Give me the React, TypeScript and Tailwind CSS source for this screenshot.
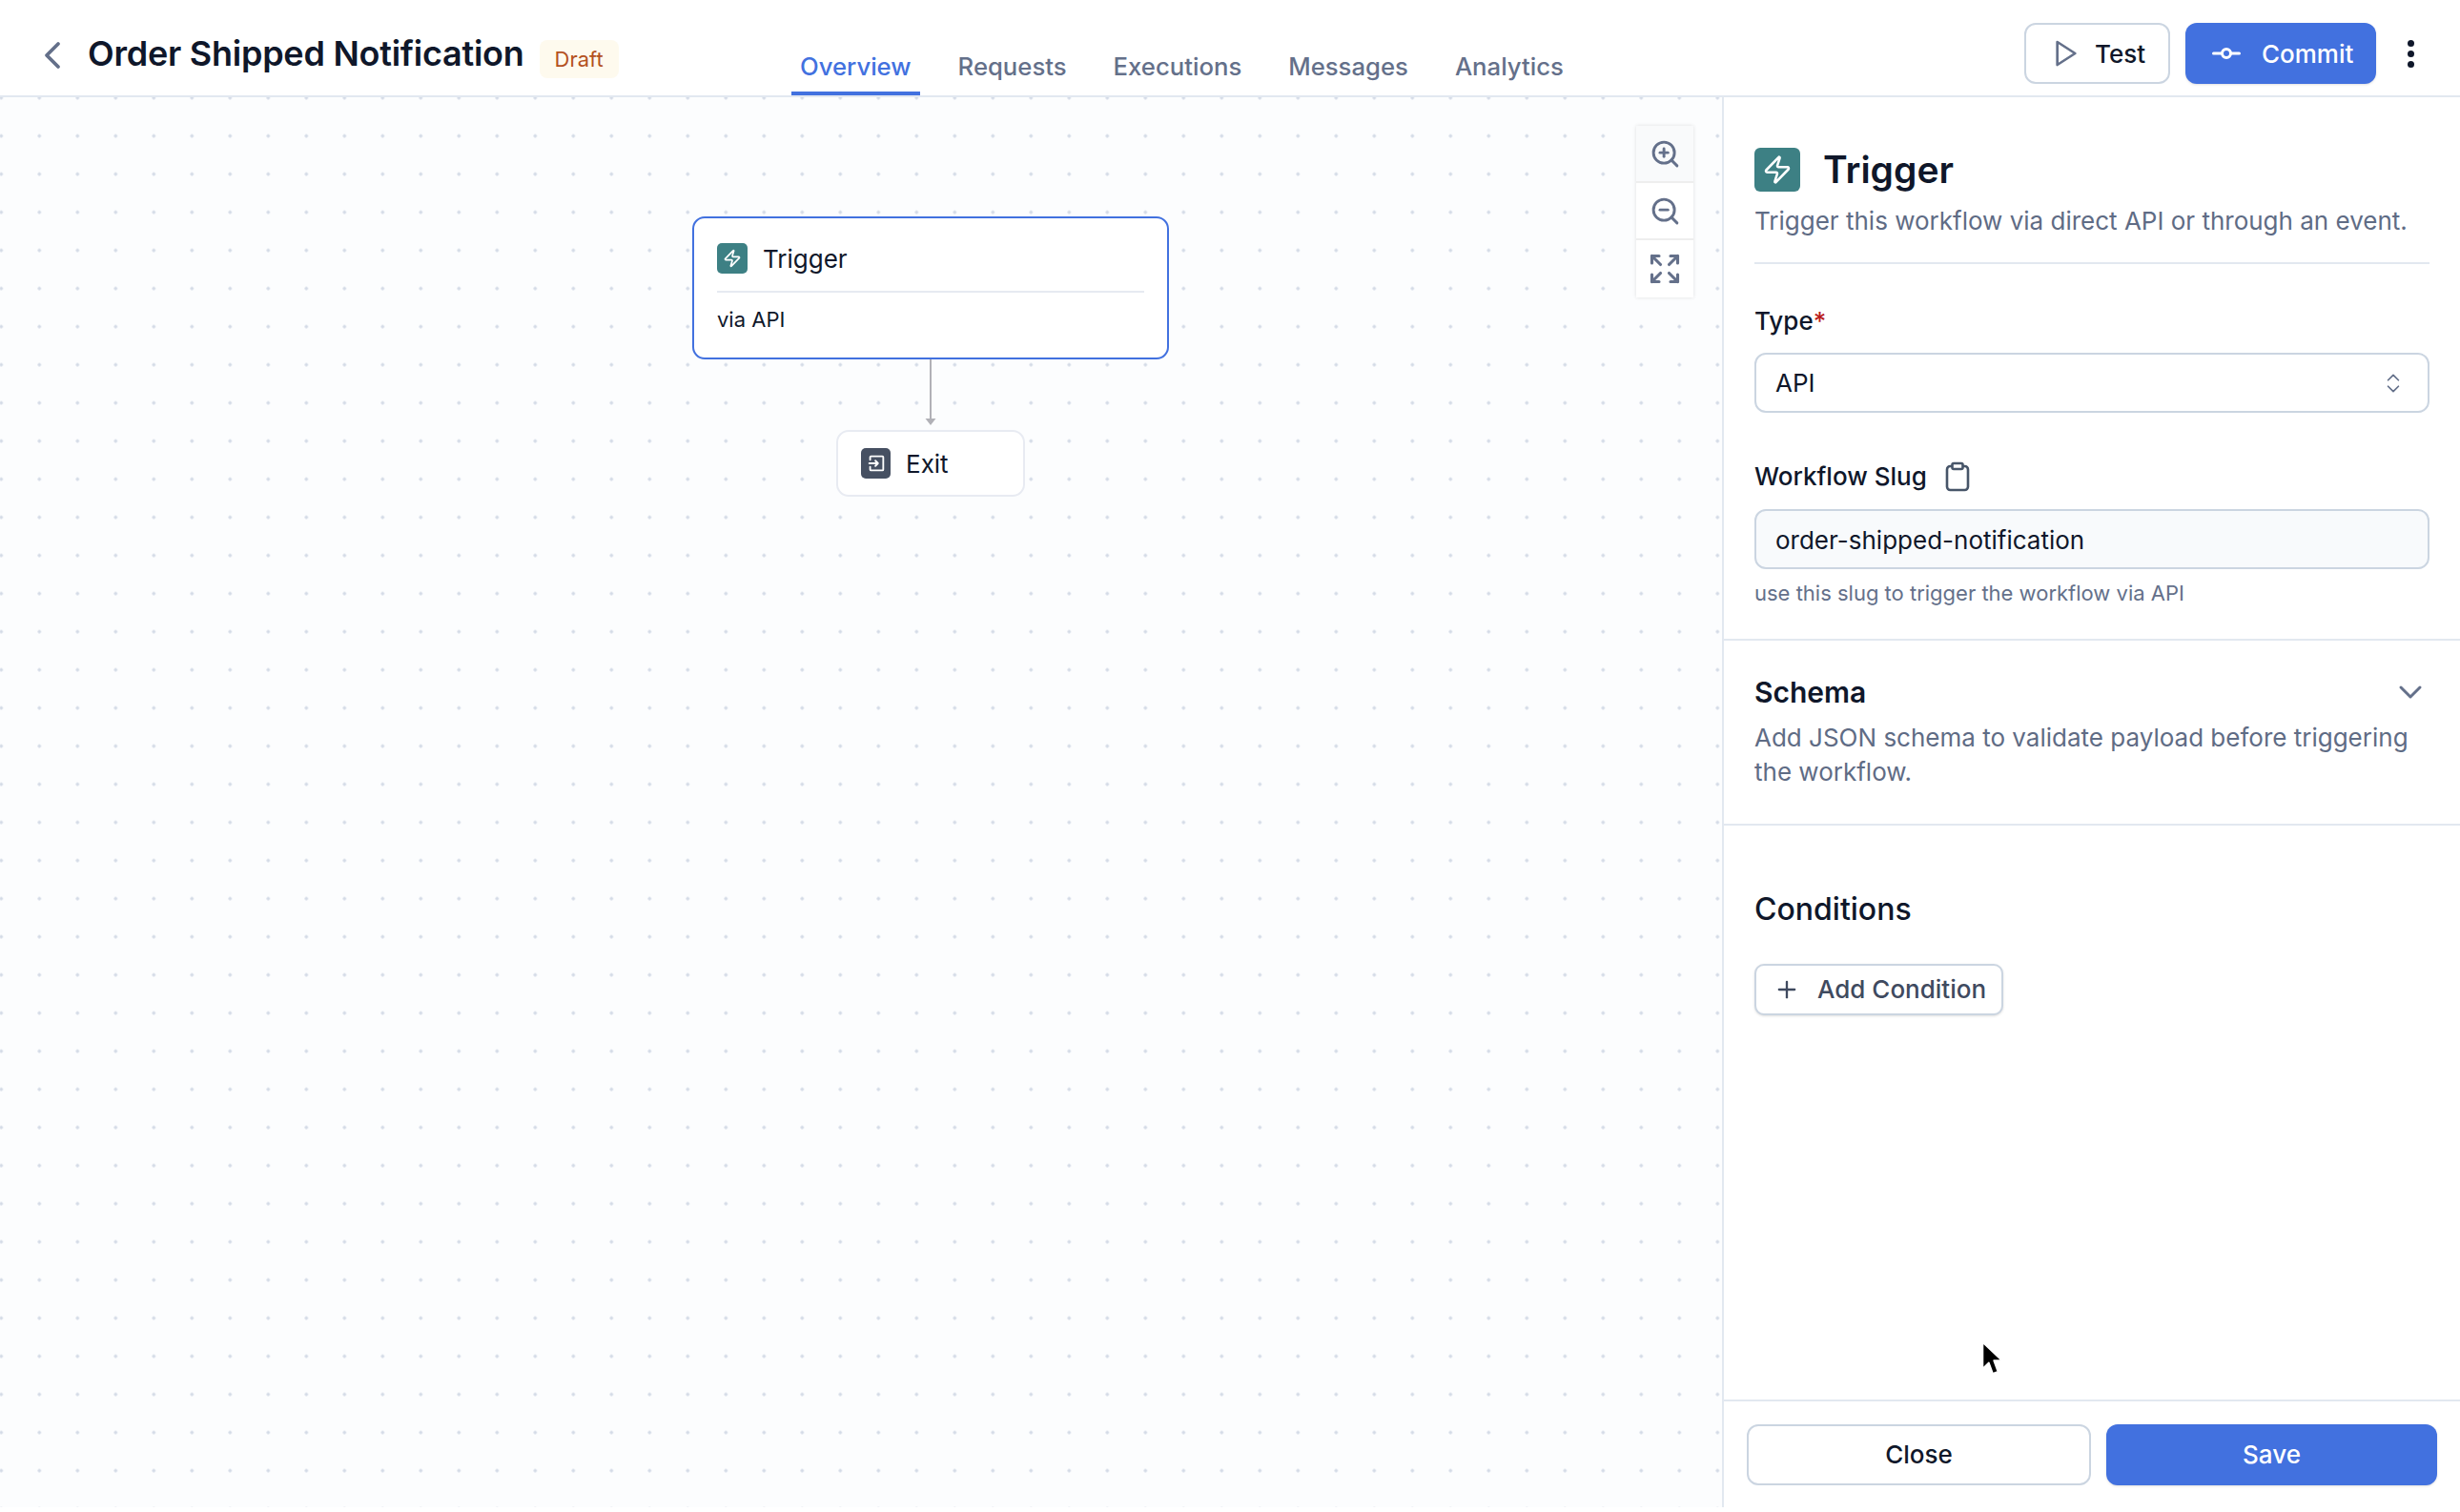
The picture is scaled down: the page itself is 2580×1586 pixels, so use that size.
import React from "react";
import { ChevronLeft, ChevronDown, ChevronsUpDown, Expand, GitCommitHorizontal, Plus, Zap, ZoomIn, ZoomOut } from "lucide-react";

const tabs = ["Overview", "Requests", "Executions", "Messages", "Analytics"];

function ExitGlyph() {
  return (
    <svg viewBox="0 0 24 24" className="w-[22px] h-[22px]" fill="none" stroke="currentColor" strokeWidth="2" strokeLinecap="round" strokeLinejoin="round">
      <path d="M5 8V5a1 1 0 0 1 1-1h13a1 1 0 0 1 1 1v14a1 1 0 0 1-1 1H6a1 1 0 0 1-1-1v-3" />
      <path d="M4 12h10M11 9l3 3-3 3" />
    </svg>
  );
}

function PlayGlyph() {
  return (
    <svg viewBox="0 0 24 24" className="w-[32px] h-[32px] text-[#64708a]" fill="none" stroke="currentColor" strokeWidth="2" strokeLinejoin="round">
      <polygon points="5 3 19 12 5 21 5 3" />
    </svg>
  );
}

function ClipboardGlyph() {
  return (
    <svg viewBox="0 0 26 32" className="w-[26px] h-[32px] text-[#475569] ml-[19px]" fill="none" stroke="currentColor" strokeWidth="2.6" strokeLinejoin="round">
      <rect x="2" y="5" width="22" height="25" rx="3.5" />
      <rect x="7.5" y="2" width="11" height="6" rx="1.5" fill="white" />
    </svg>
  );
}

function CursorGlyph() {
  return (
    <svg viewBox="0 0 22 36" className="w-[24px] h-[38px] absolute left-[2077px] top-[1406px]">
      <path d="M2 2v26l6-6 4 11 5-2-4-11h8z" fill="#000" stroke="#fff" strokeWidth="1.5" strokeLinejoin="round" />
    </svg>
  );
}

export default function App() {
  return (
    <div className="relative w-[2580px] h-[1586px] bg-white text-[#0f172a] [font-family:Inter,sans-serif] overflow-hidden">
      <div className="flex flex-col h-[1581px]">
        <header className="flex h-[102px] shrink-0 border-b-2 border-[#e2e8f0]">
          <div className="flex w-[830px] shrink-0 items-center pl-[31px] pt-[12px]">
            <ChevronLeft size={48} strokeWidth={1.9} className="text-[#64708a] shrink-0 mt-[3px]" />
            <h1 className="ml-[13px] text-[36px] leading-[48px] font-semibold tracking-[-0.25px] whitespace-nowrap">Order Shipped Notification</h1>
            <span className="ml-[16px] mt-[12px] h-[40px] px-[16px] flex items-center rounded-[8px] bg-[#fefaee] text-[#b4511f] text-[22px]">Draft</span>
          </div>
          <nav className="flex gap-[31px]">
            {tabs.map((t, i) => (
              <div
                key={t}
                className={
                  i === 0
                    ? "px-[9px] h-[100px] pt-[52px] text-[25.7px] leading-[36px] font-medium text-[#4271df] border-b-4 border-[#4271df]"
                    : "px-[9px] h-[100px] pt-[52px] text-[25.7px] leading-[36px] font-medium text-[#64708a]"
                }
              >
                {t}
              </div>
            ))}
          </nav>
          <div className="ml-auto flex items-start pt-[24px] pr-[48px]">
            <button className="flex items-center h-[64px] w-[153px] pl-[26px] rounded-[12px] border-2 border-[#cbd5e1] bg-white text-[26px] font-medium">
              <PlayGlyph />
              <span className="ml-[14px]">Test</span>
            </button>
            <button className="ml-[16px] flex items-center h-[64px] w-[200px] pl-[25px] rounded-[12px] bg-[#4271df] text-white text-[26px] font-medium shadow-sm">
              <GitCommitHorizontal size={36} strokeWidth={2} />
              <span className="ml-[19px]">Commit</span>
            </button>
            <div className="ml-[32px] h-[64px] w-[8px] flex flex-col items-center justify-center gap-[4px]">
              <span className="w-[7px] h-[7px] rounded-full bg-[#0f172a]" />
              <span className="w-[7px] h-[7px] rounded-full bg-[#0f172a]" />
              <span className="w-[7px] h-[7px] rounded-full bg-[#0f172a]" />
            </div>
          </div>
        </header>

        <div className="flex flex-1 min-h-0">
          <main className="relative flex-1 bg-[#fcfdfe] bg-[radial-gradient(#d3dae6_1.5px,transparent_1.8px)] bg-[length:40px_40px] bg-[position:-18.7px_-19.4px]">
            <div className="absolute left-[726px] top-[125px] w-[500px] h-[150px] rounded-[13px] border-2 border-[#4271df] bg-white px-[24px]">
              <div className="flex items-center h-[78px] pt-[8px] border-b-2 border-[#e6eaf1]">
                <span className="w-[32px] h-[32px] rounded-[5px] bg-[#3d8084] text-white flex items-center justify-center">
                  <Zap size={20} strokeWidth={2} />
                </span>
                <span className="ml-[16px] text-[26px]">Trigger</span>
              </div>
              <div className="pt-[12px] text-[22px] leading-[32px]">via API</div>
            </div>
            <svg className="absolute left-[968px] top-[275px] w-[16px] h-[70px]" viewBox="0 0 16 70">
              <path d="M8 0v64" stroke="#b1b1b7" strokeWidth="2" />
              <path d="M2.5 62h11L8 69z" fill="#b1b1b7" />
            </svg>
            <div className="absolute left-[877px] top-[349px] w-[198px] h-[70px] rounded-[13px] border-2 border-[#e8ebf2] bg-white pl-[24px] flex items-center">
              <span className="w-[31px] h-[32px] rounded-[5px] bg-[#465062] text-white flex items-center justify-center">
                <ExitGlyph />
              </span>
              <span className="ml-[16px] text-[26px]">Exit</span>
            </div>
            <div className="absolute left-[1716px] top-[30px] w-[60px] flex flex-col gap-[2px] bg-[#eeeeee] shadow-[0_0_4px_rgba(0,0,0,0.12)] text-[#64708a]">
              <div className="h-[58px] bg-[#f9fafb] flex items-center justify-center"><ZoomIn size={33} strokeWidth={2.1} /></div>
              <div className="h-[58px] bg-white flex items-center justify-center"><ZoomOut size={33} strokeWidth={2.1} /></div>
              <div className="h-[60px] bg-white flex items-center justify-center"><Expand size={36} strokeWidth={2.1} /></div>
            </div>
          </main>

          <aside className="w-[774px] shrink-0 border-l-2 border-[#e2e8f0] bg-white flex flex-col">
            <div className="mx-[32px] pt-[53px] pb-[25px] border-b-2 border-[#e2e8f0] w-[708px]">
              <div className="flex items-center">
                <span className="w-[48px] h-[46px] rounded-[6px] bg-[#3d8084] text-white flex items-center justify-center">
                  <Zap size={32} strokeWidth={1.9} />
                </span>
                <h2 className="ml-[24px] text-[39px] leading-[46px] font-semibold">Trigger</h2>
              </div>
              <p className="mt-[13px] text-[26px] leading-[36px] text-[#5f6c85]">Trigger this workflow via direct API or through an event.</p>
            </div>

            <div className="px-[32px] pt-[42px] pb-[32px] border-b-2 border-[#e2e8f0]">
              <label className="block text-[26px] leading-[36px] font-medium">Type<span className="text-[#b91c1c]">*</span></label>
              <div className="mt-[15px] h-[63px] w-[708px] rounded-[12px] border-2 border-[#cbd5e1] bg-white pl-[20px] pr-[23px] flex items-center justify-between text-[26px]">
                <span>API</span>
                <ChevronsUpDown size={26} strokeWidth={1.6} className="text-[#64708a]" />
              </div>
              <div className="mt-[49px] flex items-center h-[36px]">
                <span className="text-[26px] leading-[36px] font-medium">Workflow Slug</span>
                <ClipboardGlyph />
              </div>
              <div className="mt-[16px] h-[63px] w-[708px] rounded-[12px] border-2 border-[#cbd5e1] bg-[#f8fafc] pl-[20px] pt-[2px] flex items-center text-[26px]">order-shipped-notification</div>
              <p className="mt-[9px] text-[22px] leading-[32px] text-[#64708a]">use this slug to trigger the workflow via API</p>
            </div>

            <div className="px-[32px] pt-[36px] pb-[36px] border-b-2 border-[#e2e8f0]">
              <div className="flex items-center justify-between w-[708px] h-[36px]">
                <h3 className="text-[30px] leading-[36px] font-semibold">Schema</h3>
                <ChevronDown size={40} strokeWidth={1.8} className="text-[#64708a] shrink-0" />
              </div>
              <p className="mt-[12px] w-[708px] text-[26px] leading-[36px] text-[#5f6c85]">Add JSON schema to validate payload before triggering the workflow.</p>
            </div>

            <div className="px-[32px] pt-[68px]">
              <h3 className="text-[32px] leading-[40px] font-medium">Conditions</h3>
              <button className="mt-[37px] h-[54px] w-[261px] rounded-[10px] border-2 border-[#cbd5e1] shadow-sm flex items-center pl-[18px] pb-[1px] text-[26px] font-medium text-[#3f4a5f] bg-white">
                <Plus size={28} strokeWidth={2} />
                <span className="ml-[18px]">Add Condition</span>
              </button>
            </div>

            <div className="flex-1" />

            <footer className="shrink-0 border-t-2 border-[#e2e8f0] pt-[24px] pb-[23px] pl-[24px] pr-[24px] flex gap-[16px]">
              <button className="w-[361px] h-[64px] pb-[2px] rounded-[12px] border-2 border-[#cbd5e1] bg-white text-[26px] font-medium">Close</button>
              <button className="flex-1 h-[64px] pb-[2px] rounded-[12px] bg-[#4271df] text-white text-[26px] font-medium shadow-sm">Save</button>
            </footer>
          </aside>
        </div>
      </div>
      <CursorGlyph />
    </div>
  );
}
